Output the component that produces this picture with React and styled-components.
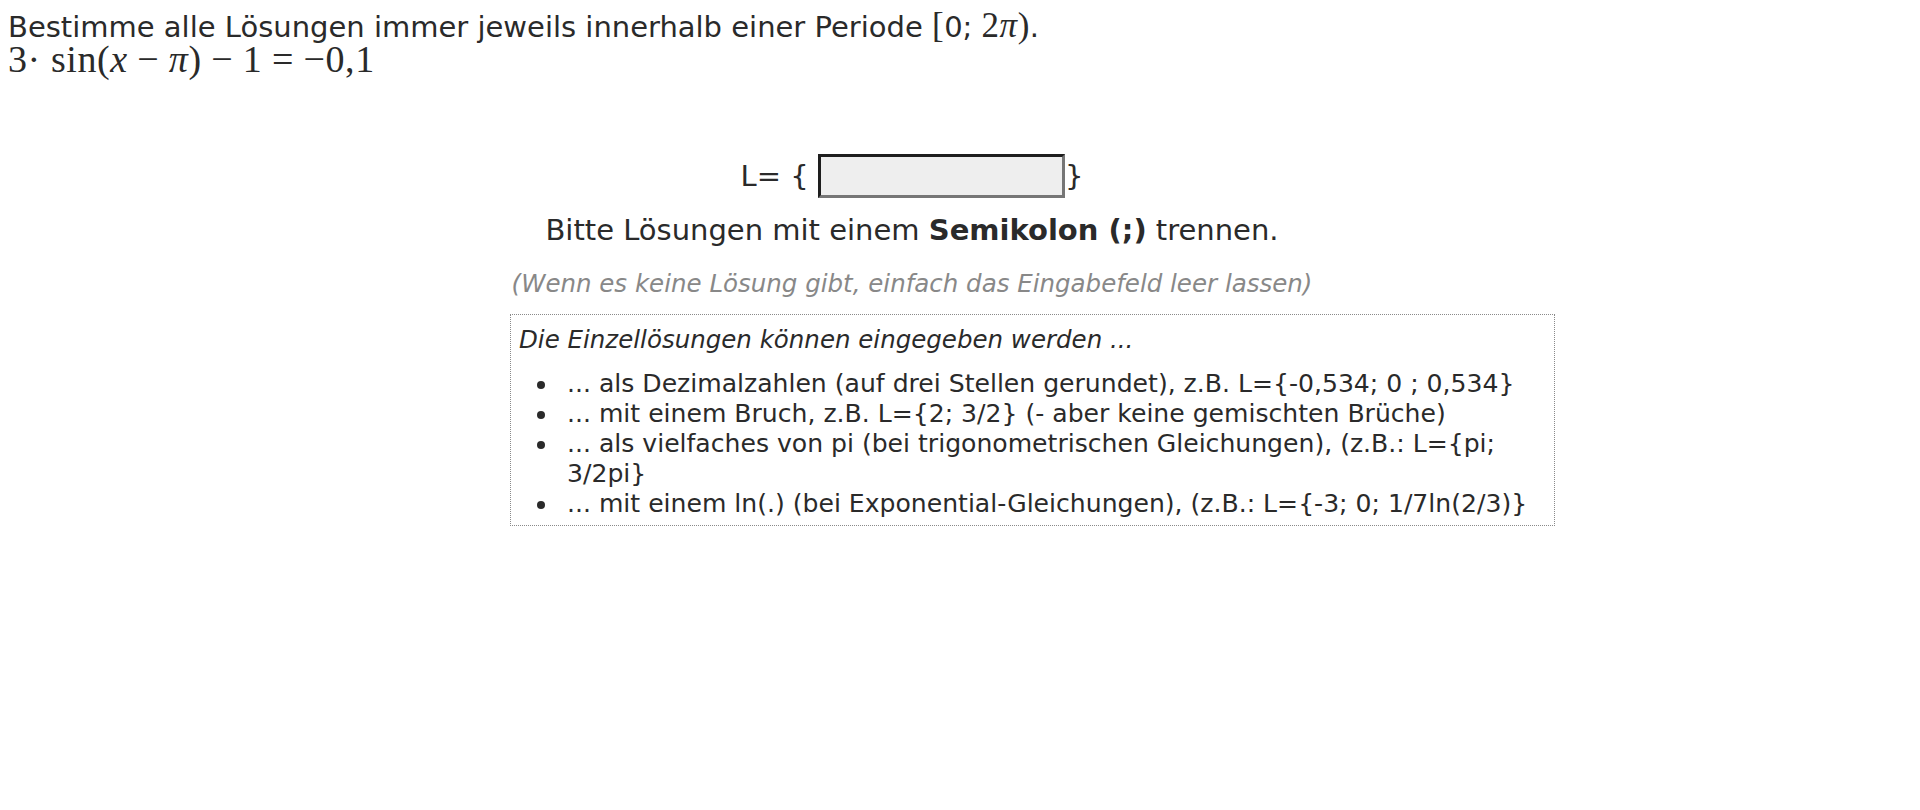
import React from "react";
import styled, { createGlobalStyle } from "styled-components";

const Global = createGlobalStyle`
  html, body { margin: 0; padding: 0; background: #fff; }
  body { font-family: "DejaVu Sans", Verdana, sans-serif; color: #2a2a2a; }
`;

const Page = styled.div`
  width: 1808px;
  padding: 8px 8px 40px 8px;
`;

const Task = styled.div`
  font-size: 29px;
  line-height: 36px;
  white-space: nowrap;
`;

const Serif = styled.span`
  font-family: "Liberation Serif", "DejaVu Serif", serif;
  font-size: ${(p) => p.$size || 35}px;
  font-style: ${(p) => (p.$italic ? "italic" : "normal")};
  letter-spacing: 0.5px;
`;

const Equation = styled.div`
  font-family: "Liberation Serif", "DejaVu Serif", serif;
  font-size: 38px;
  line-height: 28px;
  letter-spacing: 0.6px;
  white-space: nowrap;
`;

const Op = styled.span`
  margin: 0 0.25em;
`;

const Stage = styled.div`
  width: 804px;
  margin: 81px auto 0;
  display: flex;
  flex-direction: column;
  align-items: center;
`;

const AnswerRow = styled.div`
  display: flex;
  align-items: center;
  height: 44px;
  font-size: 29px;
  white-space: pre;
`;

const Field = styled.input`
  width: 241px;
  height: 38px;
  padding: 0;
  margin: 0;
  background: #eeeeee;
  border-style: solid;
  border-width: 3px;
  border-color: #1e1e1e #767676 #767676 #1e1e1e;
  outline: none;
`;

const Hint = styled.p`
  margin: 14px 0 0;
  font-size: 29px;
  line-height: 36px;
  text-align: center;
  white-space: nowrap;
`;

const Note = styled.p`
  margin: 20px 0 0;
  font-size: 24.5px;
  line-height: 32px;
  font-style: italic;
  color: #888;
  text-align: center;
  white-space: nowrap;
`;

const InfoBox = styled.div`
  align-self: flex-start;
  width: 1045px;
  box-sizing: border-box;
  margin-top: 14px;
  border: 1px dotted #8a8a8a;
  padding: 10px 8px 6px;
  font-size: 25.1px;
  line-height: 30px;
`;

const InfoTitle = styled.div`
  font-style: italic;
  font-size: 24.5px;
`;

const List = styled.ul`
  margin: 14px 0 0;
  padding-left: 40px;
  list-style: disc outside;
`;

const Item = styled.li`
  padding-left: 8px;
`;

export default function App() {
  return (
    <Page>
      <Global />
      <Task>
        Bestimme alle Lösungen immer jeweils innerhalb einer Periode{" "}
        <Serif>[</Serif>0; <Serif>2</Serif>
        <Serif $italic>π</Serif>
        <Serif>)</Serif>.
      </Task>
      <Equation>
        3·&nbsp;sin(<i>x</i>
        <Op>−</Op>
        <i>π</i>)<Op>−</Op>1<Op>=</Op>−0,1
      </Equation>
      <Stage>
        <AnswerRow>
          {"L= { "}
          <Field type="text" aria-label="Lösungsmenge" />
          {"}"}
        </AnswerRow>
        <Hint>
          Bitte Lösungen mit einem <b>Semikolon (;)</b> trennen.
        </Hint>
        <Note>(Wenn es keine Lösung gibt, einfach das Eingabefeld leer lassen)</Note>
        <InfoBox>
          <InfoTitle>Die Einzellösungen können eingegeben werden ...</InfoTitle>
          <List>
            <Item>... als Dezimalzahlen (auf drei Stellen gerundet), z.B. L={"{"}-0,534; 0 ; 0,534{"}"}</Item>
            <Item>... mit einem Bruch, z.B. L={"{"}2; 3/2{"}"} (- aber keine gemischten Brüche)</Item>
            <Item>... als vielfaches von pi (bei trigonometrischen Gleichungen), (z.B.: L={"{"}pi; 3/2pi{"}"}</Item>
            <Item>... mit einem ln(.) (bei Exponential-Gleichungen), (z.B.: L={"{"}-3; 0; 1/7ln(2/3){"}"}</Item>
          </List>
        </InfoBox>
      </Stage>
    </Page>
  );
}
